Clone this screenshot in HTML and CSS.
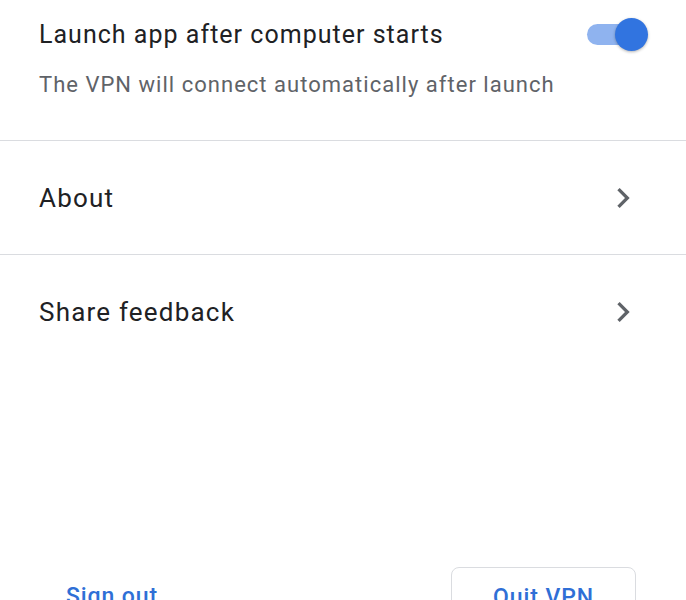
FILE: index.html
```html
<!DOCTYPE html>
<html lang="en">
<head>
    <meta charset="UTF-8">
    <meta name="viewport" content="width=device-width, initial-scale=1.0">
    <title>VPN settings</title>
    <link rel="stylesheet" href="styles.css">
</head>
<body>
    <div class="settings">
        <div class="startup">
            <div class="startup-head">
                <span class="title">Launch app after computer starts</span>
                <span class="toggle on"><span class="thumb"></span></span>
            </div>
            <p class="hint">The VPN will connect automatically after launch</p>
        </div>
        <div class="row">
            <span class="title row-title">About</span>
            <svg class="chevron" viewBox="0 0 24 24"><path d="M8.6 16.6 13.2 12 8.6 7.4 10 6l6 6-6 6z"/></svg>
        </div>
        <div class="row last">
            <span class="title row-title">Share feedback</span>
            <svg class="chevron" viewBox="0 0 24 24"><path d="M8.6 16.6 13.2 12 8.6 7.4 10 6l6 6-6 6z"/></svg>
        </div>
        <div class="spacer"></div>
        <div class="actions">
            <button class="btn text">Sign out</button>
            <button class="btn outlined">Quit VPN</button>
        </div>
    </div>
</body>
</html>
```

FILE: styles.css
```css
body {
    margin: 0;
    background: #fff;
    font-family: Roboto, 'Liberation Sans', sans-serif;
    color: #202124;
}
.settings {
    display: flex;
    flex-direction: column;
    height: 600px;
    overflow: hidden;
}
.startup {
    padding: 16px 38px 0 39px;
    height: 124px;
    border-bottom: 1px solid #dadce0;
}
.startup-head {
    display: flex;
    justify-content: space-between;
    align-items: center;
    height: 36px;
}
.title {
    font-size: 25px;
    letter-spacing: 1.02px;
}
.row-title {
    font-size: 26px;
    letter-spacing: 1.2px;
}
.hint {
    margin: 20px 0 0;
    font-size: 22px;
    color: #5f6368;
    letter-spacing: 1.02px;
}
.toggle {
    position: relative;
    width: 53px;
    height: 21px;
    border-radius: 11px;
    background: #8fb3ef;
    margin-right: 8px;
}
.toggle .thumb {
    position: absolute;
    right: -8px;
    top: -6px;
    width: 33px;
    height: 33px;
    border-radius: 50%;
    background: #3174e0;
    box-shadow: 0 1px 3px rgba(0, 0, 0, 0.3);
}
.row {
    display: flex;
    justify-content: space-between;
    align-items: center;
    height: 113px;
    padding: 0 43px 0 39px;
    border-bottom: 1px solid #dadce0;
}
.row.last {
    border-bottom: none;
}
.chevron {
    width: 40px;
    height: 40px;
    fill: #5f6368;
}
.spacer {
    flex: 1;
}
.actions {
    display: flex;
    justify-content: space-between;
    align-items: flex-start;
    padding: 0 50px 0 42px;
    height: 33px;
}
.btn {
    font-family: Roboto, 'Liberation Sans', sans-serif;
    font-size: 23px;
    font-weight: 500;
    letter-spacing: 0.9px;
    color: #2f6fd6;
    background: #fff;
    cursor: pointer;
}
.btn.text {
    border: none;
    padding: 16px 24px;
}
.btn.outlined {
    width: 185px;
    height: 60px;
    border: 1px solid #dadce0;
    border-radius: 8px;
    padding: 0;
}
```
